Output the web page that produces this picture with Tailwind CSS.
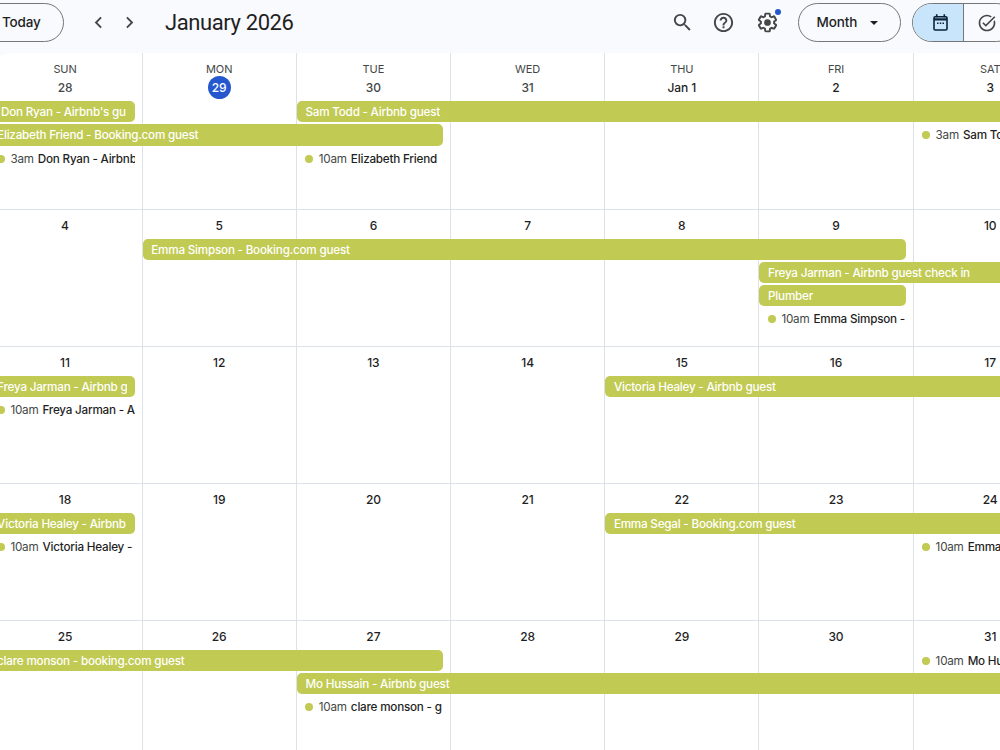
<!DOCTYPE html>
<html lang="en">
<head>
  <meta charset="UTF-8" />
  <meta name="viewport" content="width=device-width, initial-scale=1.0" />
  <title>Calendar - January 2026</title>
  <script src="https://cdn.jsdelivr.net/npm/@tailwindcss/browser@4"></script>
</head>
<body class="h-[750px] w-[1000px] overflow-hidden bg-[#f9fafe] font-['Inter','Liberation_Sans',sans-serif] text-[#1f1f1f]">

  <!-- Toolbar -->
  <header class="flex h-[53px] w-[1000px] items-start overflow-hidden pt-[3px]">
    <button class="-ml-6 flex h-[39px] w-[88px] shrink-0 items-center rounded-full border border-[#747775] pl-[25px] text-[13.5px] font-medium tracking-[-0.2px]">Today</button>
    <div class="ml-[23px] flex h-[39px] shrink-0 items-center gap-2 text-[#444746]">
      <svg class="size-[23px]" viewBox="0 0 24 24" fill="currentColor"><path d="M15.41 7.41 14 6l-6 6 6 6 1.41-1.41L10.83 12z"/></svg>
      <svg class="size-[23px]" viewBox="0 0 24 24" fill="currentColor"><path d="M10 6 8.59 7.41 13.17 12l-4.58 4.59L10 18l6-6z"/></svg>
    </div>
    <h1 class="ml-[24px] w-[506px] shrink-0 font-[Roboto,'Inter',sans-serif] text-[22px] leading-[39px] tracking-[-0.4px]">January 2026</h1>
    <div class="flex h-[39px] shrink-0 items-center gap-[18px] text-[#444746]">
      <svg class="size-[23px]" viewBox="0 0 24 24" fill="currentColor"><path d="M15.5 14h-.79l-.28-.27A6.471 6.471 0 0 0 16 9.5 6.5 6.5 0 1 0 9.5 16c1.61 0 3.09-.59 4.23-1.57l.27.28v.79l5 4.99L20.49 19l-4.99-5zm-6 0C7.01 14 5 11.99 5 9.5S7.01 5 9.5 5 14 7.01 14 9.5 11.99 14 9.5 14z"/></svg>
      <svg class="size-[23px]" viewBox="0 0 24 24" fill="currentColor"><path d="M11 18h2v-2h-2v2zm1-16C6.48 2 2 6.48 2 12s4.48 10 10 10 10-4.48 10-10S17.52 2 12 2zm0 18c-4.41 0-8-3.59-8-8s3.59-8 8-8 8 3.59 8 8-3.59 8-8 8zm0-14c-2.21 0-4 1.79-4 4h2c0-1.1.9-2 2-2s2 .9 2 2c0 2-3 1.75-3 5h2c0-2.25 3-2.5 3-5 0-2.21-1.79-4-4-4z"/></svg>
      <div class="relative ml-[3px]">
        <svg class="size-[23px]" viewBox="0 0 24 24" fill="currentColor"><path d="M13.85 22.25h-3.7c-.74 0-1.36-.54-1.45-1.27l-.27-1.89c-.27-.14-.53-.29-.79-.46l-1.8.72c-.7.26-1.47-.03-1.81-.65L2.2 15.53c-.35-.66-.2-1.44.36-1.88l1.53-1.19c-.01-.15-.02-.3-.02-.46 0-.15.01-.31.02-.46l-1.52-1.19c-.59-.45-.74-1.26-.37-1.88l1.85-3.19c.34-.62 1.11-.9 1.79-.63l1.81.73c.26-.17.52-.32.78-.46l.27-1.91c.09-.7.71-1.25 1.44-1.25h3.7c.74 0 1.36.54 1.45 1.27l.27 1.89c.27.14.53.29.79.46l1.8-.72c.71-.26 1.48.03 1.82.65l1.84 3.18c.36.66.2 1.44-.36 1.88l-1.52 1.19c.01.15.02.3.02.46s-.01.31-.02.46l1.52 1.19c.56.45.72 1.23.37 1.86l-1.86 3.22c-.34.62-1.11.9-1.8.63l-1.8-.72c-.26.17-.52.32-.78.46l-.27 1.91c-.1.68-.72 1.22-1.46 1.22zm-3.23-2h2.76l.37-2.55.53-.22c.44-.18.88-.44 1.34-.78l.45-.34 2.38.96 1.38-2.4-2.03-1.58.07-.56c.03-.26.06-.51.06-.78s-.03-.53-.06-.78l-.07-.56 2.03-1.58-1.39-2.4-2.39.96-.45-.35c-.42-.32-.87-.58-1.33-.77l-.52-.22-.37-2.55h-2.76l-.37 2.55-.53.21c-.44.19-.88.44-1.34.79l-.45.33-2.38-.95-1.39 2.39 2.03 1.58-.07.56a7 7 0 0 0-.06.79c0 .26.02.53.06.78l.07.56-2.03 1.58 1.38 2.4 2.39-.96.45.35c.43.33.86.58 1.33.77l.53.22.38 2.55z"/><circle cx="12" cy="12" r="3.5"/></svg>
        <span class="absolute -top-[2px] right-[-2px] size-1.5 rounded-full bg-[#2558cf]"></span>
      </div>
    </div>
    <button class="ml-[19px] flex h-[39px] w-[103px] shrink-0 items-center justify-between rounded-full border border-[#747775] pr-[22px] pl-[17.5px] text-[13.5px] font-medium"><span class="tracking-[-0.1px]">Month</span>
      <svg class="h-1 w-2" viewBox="0 0 8 4" fill="currentColor"><path d="M0 0h8L4 4z"/></svg>
    </button>
    <div class="ml-[11px] flex h-[39px] w-[104px] shrink-0 overflow-hidden rounded-full border border-[#747775]">
      <div class="flex w-[51px] items-center justify-center border-r border-[#747775] bg-[#c8e5fc] pl-1 text-[#0b2239]">
        <svg class="h-[17px] w-[15px]" viewBox="0 0 15 17" fill="none" stroke="currentColor" stroke-width="1.6"><rect x="1" y="2.8" width="13" height="13.2" rx="1.2"/><path d="M1 5.4h13" stroke-width="2.2"/><path d="M3.7 .3v3M11.3 .3v3"/><path d="M4 9.3h1.5M6.75 9.3h1.5M9.5 9.3H11" stroke-width="1.4"/></svg>
      </div>
      <div class="flex flex-1 items-center pl-[13px] text-[#444746]">
        <svg class="size-5 shrink-0" viewBox="0 0 24 24" fill="currentColor"><path d="M22 5.18 10.59 16.6l-4.24-4.24 1.41-1.41 2.83 2.83 10-10L22 5.18zM19.79 10.22c.13.57.21 1.17.21 1.78 0 4.42-3.58 8-8 8s-8-3.58-8-8 3.58-8 8-8c1.58 0 3.04.46 4.28 1.25l1.44-1.44A9.9 9.9 0 0 0 12 2C6.48 2 2 6.48 2 12s4.48 10 10 10 10-4.48 10-10c0-1.19-.22-2.33-.6-3.39l-1.61 1.61z"/></svg>
      </div>
    </div>
  </header>

  <!-- Month grid -->
  <main id="month-grid" class="-ml-[11.6px] w-[1079.4px] overflow-hidden rounded-tl-[24px] bg-white"></main>

  <script>
    const weekdays = ['SUN', 'MON', 'TUE', 'WED', 'THU', 'FRI', 'SAT'];

    // bar: [text, row, first column, columns, flags, left padding]   timed: [time, text, row, column]
    // flags: "<" continues from the previous week, ">" continues into the next one
    const weeks = [
      {
        days: ['28', '29', '30', '31', 'Jan 1', '2', '3'],
        bars: [["Don Ryan - Airbnb's gu", 1, 1, 1, '', 12.6], ['Sam Todd - Airbnb guest', 1, 3, 5, '>'], ['Elizabeth Friend - Booking.com guest', 2, 1, 3, '<']],
        timed: [['3am', 'Don Ryan - Airbnb', 3, 1], ['10am', 'Elizabeth Friend', 3, 3], ['3am', 'Sam Todd - Airbnb', 2, 7]],
      },
      {
        days: ['4', '5', '6', '7', '8', '9', '10'],
        bars: [['Emma Simpson - Booking.com guest', 1, 2, 5, ''], ['Freya Jarman - Airbnb guest check in', 2, 6, 2, '>'], ['Plumber', 3, 6, 1, '']],
        timed: [['10am', 'Emma Simpson -', 4, 6]],
      },
      {
        days: ['11', '12', '13', '14', '15', '16', '17'],
        bars: [['Freya Jarman - Airbnb g', 1, 1, 1, '<'], ['Victoria Healey - Airbnb guest', 1, 5, 3, '>']],
        timed: [['10am', 'Freya Jarman - A', 2, 1]],
      },
      {
        days: ['18', '19', '20', '21', '22', '23', '24'],
        bars: [['Victoria Healey - Airbnb', 1, 1, 1, '<'], ['Emma Segal - Booking.com guest', 1, 5, 3, '>']],
        timed: [['10am', 'Victoria Healey -', 2, 1], ['10am', 'Emma Segal', 2, 7]],
      },
      {
        days: ['25', '26', '27', '28', '29', '30', '31'],
        bars: [['clare monson - booking.com guest', 1, 1, 3, '<'], ['Mo Hussain - Airbnb guest', 2, 3, 5, '>']],
        timed: [['10am', 'Mo Hussain', 1, 7], ['10am', 'clare monson - g', 3, 3]],
      },
    ];

    function dayCell(day, w, col) {
      const today = w === 0 && col === 1;
      const muted = w === 0 && col < 4;
      const label = w === 0 ? `<div class="mt-[9px] h-[14px] text-[11px] leading-[14px] tracking-[-0.1px] text-[#444746]">${weekdays[col]}</div>` : '';
      const tone = today ? 'bg-[#2558cf] text-white' : muted ? 'text-[#444746]' : '';
      return `<div class="row-span-full flex flex-col items-center border-r border-[#dde1e8] ${w === 0 ? '' : 'border-t pt-[4px]'}" style="grid-column:${col + 1}">
        ${label}<div class="flex h-[23px] min-w-[23px] items-center justify-center rounded-full text-xs font-medium tracking-[-0.1px] ${tone}">${day}</div></div>`;
    }

    function bar([text, row, col, span, flags, pad]) {
      const ends = (flags === '<' ? 'rounded-r-[5px]' : flags === '>' ? 'rounded-l-[5px]' : 'rounded-[5px]') + (flags === '>' ? '' : ' mr-2');
      return `<div class="z-10 h-[21.3px] overflow-hidden bg-[#c1ca52] pr-2 text-[11.7px] leading-[22px] font-medium tracking-[-0.22px] text-white ${ends}" style="grid-row:${row + 1};grid-column:${col}/span ${span};padding-left:${pad || 8.7}px"><div class="overflow-hidden whitespace-nowrap">${text}</div></div>`;
    }

    function timed([time, text, row, col]) {
      return `<div class="z-10 mr-2 flex h-[22px] items-center overflow-hidden pl-[8.5px] text-[11.7px] leading-[22px] tracking-[-0.22px] whitespace-nowrap" style="grid-row:${row + 1};grid-column:${col}">
        <span class="mr-[5.5px] size-2 shrink-0 rounded-full bg-[#c1ca52]"></span><span class="mr-1 text-[#444746]">${time}</span><span class="font-medium">${text}</span></div>`;
    }

    document.getElementById('month-grid').innerHTML = weeks.map((week, w) => `
      <section class="grid grid-cols-7 ${w === 0 ? 'h-[156px] grid-rows-[48.2px_repeat(4,23.2px)_1fr]' : 'h-[137.1px] grid-rows-[29.8px_repeat(4,23.1px)_1fr]'}">
        ${week.days.map((d, i) => dayCell(d, w, i)).join('')}${week.bars.map(bar).join('')}${week.timed.map(timed).join('')}
      </section>`).join('');
  </script>
</body>
</html>
